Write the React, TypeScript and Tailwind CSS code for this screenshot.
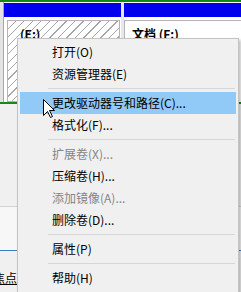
import React from "react";

type Item = { label: string; disabled?: boolean; active?: boolean } | "sep";

const items: Item[] = [
  { label: "打开(O)" },
  { label: "资源管理器(E)" },
  "sep",
  { label: "更改驱动器号和路径(C)...", active: true },
  { label: "格式化(F)..." },
  "sep",
  { label: "扩展卷(X)...", disabled: true },
  { label: "压缩卷(H)..." },
  { label: "添加镜像(A)...", disabled: true },
  { label: "删除卷(D)..." },
  "sep",
  { label: "属性(P)" },
  "sep",
  { label: "帮助(H)" },
];

function Cursor() {
  return (
    <svg
      className="absolute left-[43px] top-[99px]"
      width="13"
      height="20"
      viewBox="0 0 13 20"
    >
      <path
        d="M0.5 0.5 L0.5 16.5 L4.5 12.5 L7.5 18.5 L9.5 17.5 L6.5 11.5 L11.5 11.5 Z"
        fill="#fff"
        stroke="#000"
        strokeWidth="1"
        strokeLinejoin="miter"
      />
    </svg>
  );
}

export default function App() {
  return (
    <div
      className="relative w-[241px] h-[292px] overflow-hidden bg-[#f0f0f0] text-[12px] text-black"
      style={{ fontFamily: '"Noto Sans CJK SC", "Noto Sans", sans-serif' }}
    >
      {/* disk row */}
      <div className="h-[2px] bg-[#148a14]" />
      <div className="flex h-[100px]">
        <div className="w-[4px] bg-[#e3e3e3] border-r border-[#a8a8a8]" />
        <div className="w-[117px] flex flex-col pt-[1px] bg-white">
          <div className="h-[14px] bg-[#0000ee]" />
          <div className="h-[3px]" />
          <div className="flex-1 ml-[3px] mr-[1px] border border-[#b4b4b4] bg-[repeating-linear-gradient(135deg,#ffffff_0px,#ffffff_5px,#a6a6a6_5px,#a6a6a6_6px)] pl-[12px] pt-[5px] leading-[16px]">
            <div className="font-bold">(E:)</div>
            <div className="whitespace-nowrap">40.00 GB NTFS</div>
            <div className="whitespace-nowrap">状态良好 (主分区)</div>
          </div>
        </div>
        <div className="w-[3px] bg-[#e8e8e8]" />
        <div className="flex-1 flex flex-col pt-[1px] bg-white">
          <div className="h-[14px] bg-[#0000ee]" />
          <div className="h-[3px]" />
          <div className="flex-1 border-l border-t border-[#b4b4b4] pl-[7px] pt-[5px] leading-[16px] font-bold whitespace-nowrap">
            文档 (F:)
          </div>
        </div>
      </div>
      <div className="h-[2px] bg-[#148a14]" />

      {/* lower area */}
      <div className="h-[102px] bg-[#f0f0f0]" />
      <div className="h-[1px] bg-[#d4d4d4]" />
      <div className="h-[43px] bg-[#f7f7f7]" />
      <div className="h-[1px] bg-[#3b80c4]" />
      <div className="h-[20px] bg-[#f0f0f0]" />
      <div className="w-[17px] overflow-hidden flex justify-end leading-[14px]">
        <span className="whitespace-nowrap underline">焦点</span>
      </div>

      {/* context menu */}
      <div className="absolute left-[17px] top-[38px] w-[222px] h-[256px] bg-[#f0f0f0] border border-[#c4c4c4] shadow-[2px_2px_3px_rgba(0,0,0,0.25)] px-[2px] pt-[2px]">
        {items.map((it, i) =>
          it === "sep" ? (
            <div key={i} className="h-[7px] flex items-center pl-[28px] pr-[1px]">
              <div className="h-[1px] w-full bg-[#d7d7d7]" />
            </div>
          ) : (
            <div
              key={i}
              className={`h-[22px] leading-[22px] pl-[32px] whitespace-nowrap ${
                it.active ? "bg-[#91c9f7]" : ""
              } ${it.disabled ? "text-[#858585]" : "text-black"}`}
            >
              {it.label}
            </div>
          )
        )}
      </div>

      <Cursor />
    </div>
  );
}
